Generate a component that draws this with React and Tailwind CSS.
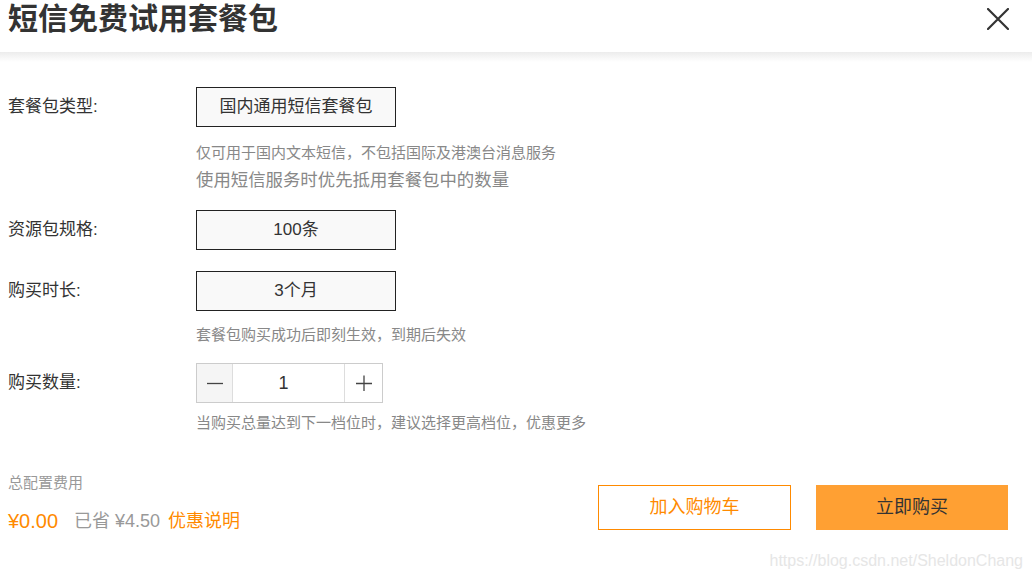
const font = { fontFamily: '"Liberation Sans", "Noto Sans CJK SC", sans-serif' }

function OptionRow({ label, value }) {
  return (
    <div className="flex items-center">
      <div className="w-[188px] text-[17px] text-[#333]">{label}</div>
      <div className="w-[200px] h-[40px] border border-[#222] bg-[#f9f9f9] flex items-center justify-center text-[17px] text-[#333]">
        {value}
      </div>
    </div>
  )
}

function Hint({ children, className = '' }) {
  return (
    <div className={`pl-[188px] text-[15px] leading-[20px] text-[#888] ${className}`}>{children}</div>
  )
}

export default function App() {
  return (
    <div className="relative w-[1032px] h-[582px] bg-white overflow-hidden" style={font}>
      <div className="h-[52px] flex items-start justify-between pl-[8px] pr-[23px]">
        <h1 className="text-[30px] leading-[38px] font-bold text-[#333]">短信免费试用套餐包</h1>
        <button className="mt-[8px]">
          <svg width="22" height="22" viewBox="0 0 22 22">
            <path d="M1 1L21 21M21 1L1 21" stroke="#333" strokeWidth="2.2" strokeLinecap="round" />
          </svg>
        </button>
      </div>
      <div className="h-[10px] bg-gradient-to-b from-[#ececec] to-white"></div>

      <div className="pl-[8px] pt-[25px]">
        <OptionRow label="套餐包类型:" value="国内通用短信套餐包" />
        <Hint className="mt-[16px]">仅可用于国内文本短信，不包括国际及港澳台消息服务</Hint>
        <div className="pl-[188px] mt-[5px] text-[17.4px] leading-[24px] text-[#888]">使用短信服务时优先抵用套餐包中的数量</div>

        <div className="mt-[18px]">
          <OptionRow label="资源包规格:" value="100条" />
        </div>
        <div className="mt-[21px]">
          <OptionRow label="购买时长:" value="3个月" />
        </div>
        <Hint className="mt-[14px]">套餐包购买成功后即刻生效，到期后失效</Hint>

        <div className="flex items-center mt-[18px]">
          <div className="w-[188px] text-[17px] text-[#333]">购买数量:</div>
          <div className="w-[187px] h-[40px] border border-[#ccc] flex">
            <button className="w-[36px] bg-[#f5f5f5] border-r border-[#ddd] flex items-center justify-center">
              <svg width="16" height="16" viewBox="0 0 16 16">
                <path d="M0 8.5H16" stroke="#444" strokeWidth="1.3" />
              </svg>
            </button>
            <div className="flex-1 flex items-center justify-center pr-[10px] text-[18px] text-[#333]">1</div>
            <button className="w-[38px] border-l border-[#ddd] flex items-center justify-center">
              <svg width="16" height="16" viewBox="0 0 16 16">
                <path d="M0 8.5H16M8 0.5V16.5" stroke="#444" strokeWidth="1.3" />
              </svg>
            </button>
          </div>
        </div>
        <Hint className="mt-[10px]">当购买总量达到下一档位时，建议选择更高档位，优惠更多</Hint>
      </div>

      <div className="flex justify-between pl-[8px] pr-[24px] mt-[41px]">
        <div>
          <div className="text-[15px] leading-[18px] text-[#999]">总配置费用</div>
          <div className="flex items-end mt-[17px] leading-[24px]">
            <span className="text-[20px] text-[#ff8a00]">¥0.00</span>
            <span className="ml-[16px] text-[18px] text-[#999]">已省 ¥4.50</span>
            <span className="ml-[8px] text-[18px] text-[#ff8a00]">优惠说明</span>
          </div>
        </div>
        <div className="flex gap-[25px] mt-[11px]">
          <button className="w-[193px] h-[45px] border border-[#ff8a00] bg-white text-[18px] text-[#ff8a00]">加入购物车</button>
          <button className="w-[192px] h-[45px] bg-[#ffa033] text-[18px] text-[#333]">立即购买</button>
        </div>
      </div>

      <div className="absolute right-[9px] bottom-[9px] text-[16px] text-[#e6e6e6]">https://blog.csdn.net/SheldonChang</div>
    </div>
  )
}
